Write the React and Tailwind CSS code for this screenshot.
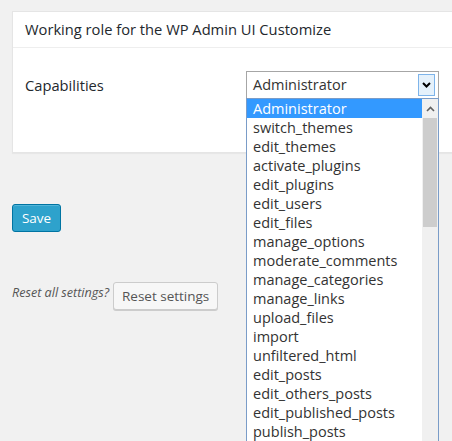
const caps = [
  'Administrator',
  'switch_themes',
  'edit_themes',
  'activate_plugins',
  'edit_plugins',
  'edit_users',
  'edit_files',
  'manage_options',
  'moderate_comments',
  'manage_categories',
  'manage_links',
  'upload_files',
  'import',
  'unfiltered_html',
  'edit_posts',
  'edit_others_posts',
  'edit_published_posts',
  'publish_posts',
];

const App = () => {
  return (
    <div className="relative w-[452px] h-[441px] overflow-hidden bg-[#f1f1f1] font-['Open_Sans',sans-serif] text-[#23282d]">
      <div className="ml-[12px] mt-[11px] w-[470px] bg-white border border-[#e5e5e5] shadow-[0_1px_1px_rgba(0,0,0,0.04)]">
        <div className="h-[36px] px-[12px] flex items-center border-b border-[#eeeeee] text-[14.7px]">
          Working role for the WP Admin UI Customize
        </div>
        <div className="h-[104px] pt-[23px] pl-[12px] flex items-start">
          <div className="w-[221px] h-[28px] flex items-center text-[14.7px]">Capabilities</div>
          <div className="relative w-[193px] h-[28px] border border-[#a6a6a6] bg-white flex items-center">
            <span className="pl-[6px] text-[14.5px] text-[#333]">Administrator</span>
            <div className="absolute right-[3px] top-[2px] w-[17px] h-[22px] bg-[#e5f1fb] border border-[#7eb4ea] flex items-center justify-center">
              <svg width="9" height="6" viewBox="0 0 9 6">
                <path d="M1 1 L4.5 4.5 L8 1" fill="none" stroke="#000" strokeWidth="2" />
              </svg>
            </div>
            <div className="absolute left-[-1px] top-[26px] w-[193px] h-[400px] bg-white border border-[#7a9cc8] flex z-10">
              <div className="flex-1">
                {caps.map((c, i) => (
                  <div
                    key={c}
                    className={`h-[19px] pl-[6px] flex items-center text-[14.5px] ${i === 0 ? 'bg-[#3399ff] text-white' : 'text-[#333]'}`}
                  >
                    {c}
                  </div>
                ))}
              </div>
              <div className="w-[16px] bg-[#f0f0f0] flex flex-col items-center">
                <div className="h-[19px] w-full flex items-center justify-center">
                  <svg width="9" height="6" viewBox="0 0 9 6">
                    <path d="M1 5 L4.5 1.5 L8 5" fill="none" stroke="#606060" strokeWidth="1.6" />
                  </svg>
                </div>
                <div className="w-[14px] h-[109px] bg-[#cdcdcd]" />
              </div>
            </div>
          </div>
        </div>
      </div>

      <div className="ml-[12px] mt-[51px]">
        <button className="w-[49px] h-[28px] rounded-[3px] bg-[#2ea2cc] border border-[#0074a2] text-white text-[13.5px] shadow-[inset_0_1px_0_rgba(120,200,230,0.5)]">
          Save
        </button>
      </div>

      <div className="ml-[12px] mt-[50px] flex items-center gap-[4px]">
        <span className="italic text-[12.6px] text-[#555] -mt-[6px]">Reset all settings?</span>
        <button className="w-[105px] h-[28px] rounded-[3px] bg-[#f7f7f7] border border-[#cccccc] text-[#555] text-[13.5px] shadow-[0_1px_0_#ccc]">
          Reset settings
        </button>
      </div>
    </div>
  );
};

export default App;
